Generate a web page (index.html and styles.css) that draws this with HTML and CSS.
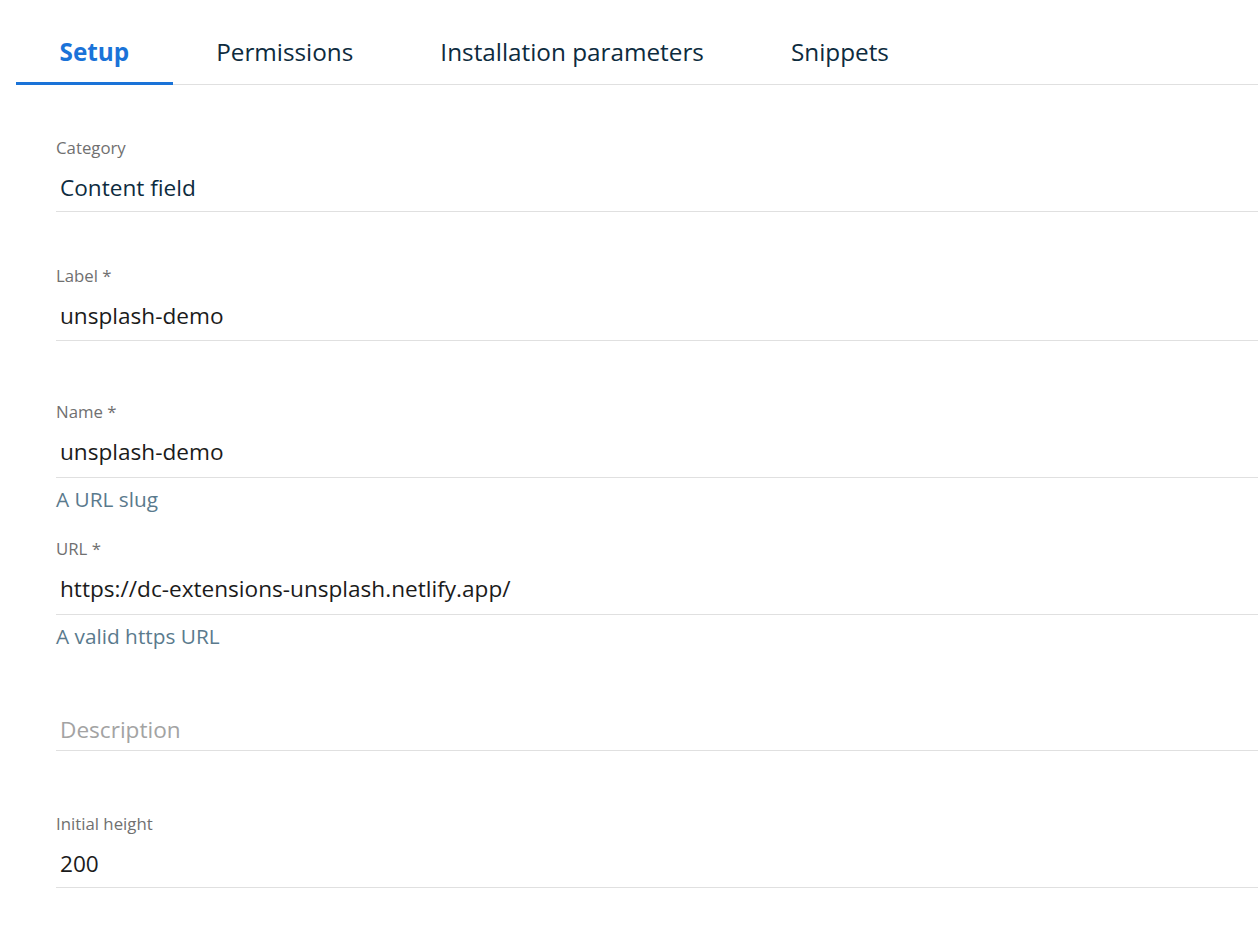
FILE: index.html
```html
<!DOCTYPE html>
<html lang="en">
<head>
<meta charset="utf-8">
<title>Setup</title>
<link rel="stylesheet" href="styles.css">
</head>
<body>
<div class="page">
  <nav class="tabs">
    <div class="tab active">Setup</div>
    <div class="tab">Permissions</div>
    <div class="tab">Installation parameters</div>
    <div class="tab">Snippets</div>
  </nav>
  <form class="form">
    <div class="field f-category">
      <div class="label">Category</div>
      <div class="input navy">Content field</div>
    </div>
    <div class="field f-label">
      <div class="label">Label *</div>
      <div class="input mid">unsplash-demo</div>
    </div>
    <div class="field f-name">
      <div class="label">Name *</div>
      <div class="input tall">unsplash-demo</div>
      <div class="helper">A URL slug</div>
    </div>
    <div class="field f-url">
      <div class="label">URL *</div>
      <div class="input tall">https://dc-extensions-unsplash.netlify.app/</div>
      <div class="helper">A valid https URL</div>
    </div>
    <div class="field f-desc">
      <div class="input placeholder">Description</div>
    </div>
    <div class="field f-height">
      <div class="label">Initial height</div>
      <div class="input">200</div>
    </div>
  </form>
</div>
</body>
</html>
```
FILE: styles.css
```css
html, body {
  margin: 0;
  padding: 0;
  background: #ffffff;
}
body {
  font-family: "Open Sans", "Noto Sans", "Liberation Sans", Arial, sans-serif;
  color: #1d1d1d;
}
.page {
  width: 1258px;
  overflow: hidden;
}
.tabs {
  display: flex;
  margin-left: 16px;
  padding-top: 34px;
  border-bottom: 1px solid #e0e0e0;
}
.tab {
  padding: 0 43.5px;
  font-size: 24.3px;
  line-height: 36px;
  height: 51px;
  box-sizing: border-box;
  color: #0d2b3e;
  border-bottom: 3px solid transparent;
  margin-bottom: -1px;
}
.tab.active {
  color: #1a73d8;
  font-weight: 700;
  border-bottom-color: #1a73d8;
}
.form {
  padding-left: 56px;
}
.field {
  display: flex;
  flex-direction: column;
}
.label {
  font-size: 16.8px;
  line-height: 20px;
  color: #707070;
  margin-bottom: 15px;
}
.input {
  font-size: 22.6px;
  line-height: 30px;
  padding: 0 4px 8px;
  border-bottom: 1px solid #e0e0e0;
  color: #1b1b1b;
  width: 1300px;
}
.input.mid {
  padding-bottom: 9px;
}
.input.tall {
  padding-bottom: 10px;
}
.input.navy {
  color: #0d2b3e;
}
.input.placeholder {
  color: #a3a3a3;
  padding-bottom: 5px;
}
.helper {
  font-size: 20.8px;
  line-height: 24px;
  margin-top: 9px;
  color: #5a7a8d;
}
.f-category { margin-top: 53px; }
.f-label { margin-top: 54px; }
.f-name { margin-top: 61px; }
.f-url { margin-top: 28px; }
.f-desc { margin-top: 67px; }
.f-height { margin-top: 63px; }
```
